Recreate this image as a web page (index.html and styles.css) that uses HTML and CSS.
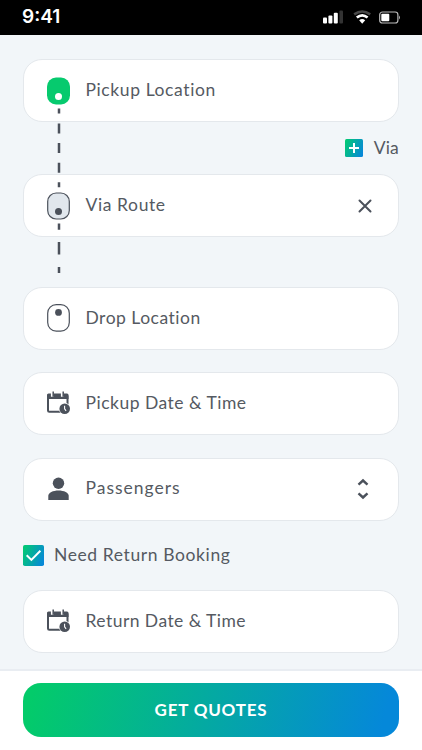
FILE: index.html
```html
<!DOCTYPE html>
<html lang="en">
<head>
<meta charset="utf-8">
<meta name="viewport" content="width=device-width, initial-scale=1">
<title>Get Quotes</title>
<link rel="stylesheet" href="styles.css">
</head>
<body>
<svg class="defs" width="0" height="0" aria-hidden="true">
  <defs>
    <linearGradient id="brand" x1="0" y1="0.3" x2="1" y2="0.7">
      <stop offset="0" stop-color="#02c777"/><stop offset="1" stop-color="#0788d8"/>
    </linearGradient>
    <symbol id="calendar" viewBox="0 0 23 24">
      <rect x="1" y="4" width="19.5" height="16.8" rx="1.3" fill="none" stroke="#4b515b" stroke-width="2"/>
      <path d="M0 4q0-1.500 1.500-1.500h18.500q1.500 0 1.500 1.500v4h-21.500z" fill="#4b515b"/>
      <path d="M5.300 0v5.800M15.300 0v5.800" stroke="#fff" stroke-width="2.800"/>
      <path d="M6.200 .6v5.200M16.200 .6v5.200" stroke="#4b515b" stroke-width="1.500"/>
      <circle cx="17.700" cy="17.700" r="5.900" fill="#fff"/>
      <circle cx="17.700" cy="17.700" r="5.300" fill="#4b515b"/>
      <path d="M17.600 14.700v3.200l1.500 2" fill="none" stroke="#fff" stroke-width="1.100"/>
    </symbol>
  </defs>
</svg>
<header class="status">
  <span class="clock">9:41</span>
  <svg class="signals" width="80" height="16" viewBox="0 0 80 16">
    <g fill="#fff"><rect x="1" y="9.5" width="4" height="6" rx="1"/><rect x="6.4" y="7.5" width="4" height="8" rx="1"/><rect x="11.8" y="4.8" width="4" height="10.700" rx="1"/></g>
    <rect x="17.4" y="2.6" width="3.600" height="12.900" rx="1" fill="#333"/>
    <g fill="none" stroke-width="2.600">
      <path d="M32.2 6.4Q40.2 0.6 48.2 6.4" stroke="#484848"/>
      <path d="M34.8 9.600Q40.2 5.200 45.6 9.600" stroke="#fff"/>
    </g>
    <path d="M37.2 12.200Q40.2 10 43.2 12.200L40.2 15.700Z" fill="#fff"/>
    <rect x="57.700" y="4" width="18.200" height="11" rx="2.800" fill="none" stroke="#bbb" stroke-width="1.200"/>
    <rect x="59.300" y="5.700" width="8" height="7.600" rx="1" fill="#fff"/>
    <path d="M77 7.500q2 2 0 4z" fill="#aaa"/>
  </svg>
</header>
<main class="form">
  <div class="route">
    <div class="field">
      <svg class="icon" width="23" height="28" viewBox="0 0 23 28"><rect y=".5" width="23" height="27" rx="9" fill="#06ca6e"/><circle cx="11.5" cy="19.4" r="3.5" fill="#fff"/></svg>
      <span class="label pickup">Pickup Location</span>
    </div>
    <div class="via">
      <svg width="18" height="18" viewBox="0 0 18 18"><rect width="18" height="18" rx="1.5" fill="url(#brand)"/><path d="M4 9h10M9 4v10" stroke="#fff" stroke-width="2"/></svg>
      <span class="via-text">Via</span>
    </div>
    <div class="field">
      <svg class="icon" width="23" height="28" viewBox="0 0 23 28"><rect x=".7" y="1" width="21.6" height="26" rx="8.5" fill="#e1e7ed" stroke="#4b515b" stroke-width="1.2"/><circle cx="11.5" cy="19.4" r="3.5" fill="#4b515b"/></svg>
      <span class="label route-label">Via Route</span>
      <svg class="close" width="14" height="14" viewBox="0 0 14 14"><path d="M1.5 1.5l11 11m0-11l-11 11" stroke="#4b515b" stroke-width="2" stroke-linecap="round"/></svg>
    </div>
    <svg class="dashes" width="4" height="170" viewBox="0 0 4 170"><path d="M2 .5v5M2 15.5v10M2 35v10M2 54.8v10M2 74.2v5M2 115.5v6.3M2 134v12.5M2 159v6" stroke="#4b515b" stroke-width="2.5"/></svg>
  </div>
  <div class="field drop">
    <svg class="icon" width="23" height="28" viewBox="0 0 23 28"><rect x=".7" y=".7" width="21.6" height="26.4" rx="8.5" fill="#fff" stroke="#4b515b" stroke-width="1.2"/><circle cx="11.5" cy="8.4" r="3.4" fill="#4b515b"/></svg>
    <span class="label drop-label">Drop Location</span>
  </div>
  <div class="field date">
    <svg class="icon" width="23" height="24"><use href="#calendar"/></svg>
    <span class="label date-label">Pickup Date &amp; Time</span>
  </div>
  <div class="field people">
    <svg class="icon" width="23" height="24" viewBox="0 0 23 24"><circle cx="11.5" cy="6.3" r="5.7" fill="#4b515b"/><path d="M1.300 23v-4.300c0-3.100 4.700-5.300 10.200-5.300s10.200 2.200 10.200 5.300V23z" fill="#4b515b"/></svg>
    <span class="label people-label">Passengers</span>
    <svg class="stepper" width="14" height="22" viewBox="0 0 14 22"><path d="M2.500 6.700L7 2.500l4.500 4.200M2.500 15.300L7 19.500l4.500-4.200" fill="none" stroke="#4b515b" stroke-width="2.400"/></svg>
  </div>
  <div class="return-option">
    <svg width="21" height="21" viewBox="0 0 21 21"><rect width="21" height="21" rx="1.8" fill="url(#brand)"/><path d="M3.700 10.200l4.700 4.700 9-9.200" fill="none" stroke="#fff" stroke-width="2"/></svg>
    <span class="return-text">Need Return Booking</span>
  </div>
  <div class="field return">
    <svg class="icon" width="23" height="24"><use href="#calendar"/></svg>
    <span class="label return-label">Return Date &amp; Time</span>
  </div>
</main>
<footer class="footer"><button class="quote" type="button">GET QUOTES</button></footer>
</body>
</html>
```
FILE: styles.css
```css
* { box-sizing: border-box; }
body {
  margin: 0;
  height: 750px;
  display: flex;
  flex-direction: column;
  overflow: hidden;
  background: #f2f6f9;
  color: #555a62;
  font-family: Lato, "Open Sans", sans-serif;
  font-size: 17.5px;
}
svg { display: block; flex: none; }
.defs { position: absolute; }
.status {
  height: 35px;
  flex: none;
  display: flex;
  justify-content: space-between;
  padding: 7px 20px 0 22px;
  background: #000;
  color: #fff;
}
.clock { font: 600 19px/20px Inter, sans-serif; letter-spacing: 0; }
.signals { margin-top: 1px; }
.form { height: 634px; flex: none; padding: 24px 23px 0; }
.route { position: relative; }
.field {
  height: 63px;
  display: flex;
  align-items: center;
  padding: 0 23px;
  background: #fff;
  border: 1px solid #e4e8ec;
  border-radius: 19px;
}
.label { margin-left: 15.5px; padding-bottom: 2px; line-height: 24px; white-space: nowrap; }
.via {
  height: 52px;
  display: flex;
  align-items: center;
  justify-content: flex-end;
  gap: 11px;
}
.via-text { padding-bottom: 2px; letter-spacing: .2px; }
.dashes { position: absolute; left: 33.5px; top: 49px; }
.close { margin: 0 3px 0 auto; }
.stepper { margin: 0 5px 0 auto; }
.drop { margin-top: 50px; }
.drop .icon { margin-top: -1px; }
.date { margin-top: 22px; }
.date .icon, .return .icon { margin-top: -1px; }
.people { margin-top: 22.500px; }
.people .icon, .people .stepper { margin-top: -1px; }
.return-option { height: 69.500px; display: flex; align-items: center; gap: 10px; }
.return-text { padding-bottom: 2px; }
.footer { flex: 1; padding: 12px 23px; background: #fff; border-top: 2px solid #e9edf2; }
.quote {
  display: block;
  width: 100%;
  height: 54px;
  padding: 0;
  border: 0;
  border-radius: 18px;
  background: linear-gradient(105deg, #03cb6a 3%, #0588d9 95%);
  color: #fff;
  font: 700 17px/54px Lato, sans-serif;
  letter-spacing: .8px;
}
.pickup, .route-label, .return-text { letter-spacing: .6px; }
.drop-label, .date-label { letter-spacing: .5px; }
.people-label { letter-spacing: 1px; }
.return-label { letter-spacing: .45px; }
```
